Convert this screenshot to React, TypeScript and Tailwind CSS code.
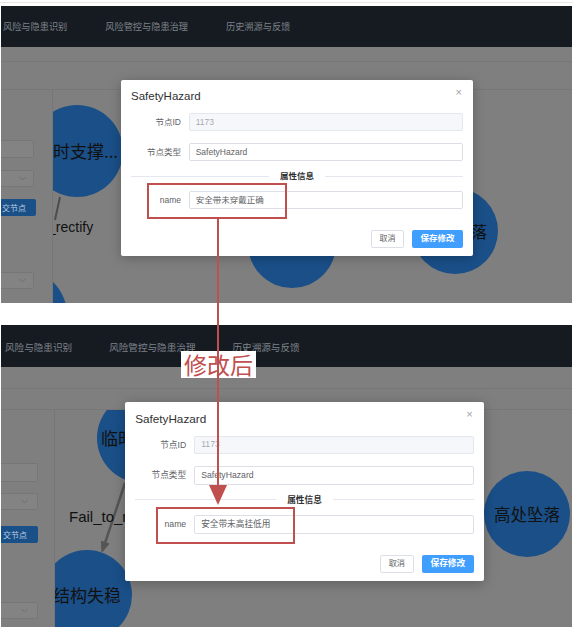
import React from "react";

const sans = "font-['Liberation_Sans','Noto_Sans_CJK_SC',sans-serif]";

function Row({ label, value, disabled }: { label: string; value: string; disabled?: boolean }) {
  return (
    <div className="flex items-center gap-[7.7px]">
      <span className="w-[50px] text-right text-[8.5px] text-[#606266] leading-none">{label}</span>
      <div
        className={
          disabled
            ? "flex-1 h-[18px] border border-[#e4e7ed] rounded-[2px] flex items-center px-[6px] text-[8.5px] bg-[#f5f7fa] text-[#a8abb2]"
            : "flex-1 h-[18px] border border-[#dcdfe6] rounded-[2px] flex items-center px-[6px] text-[8.5px] bg-white text-[#606266]"
        }
      >
        {value}
      </div>
    </div>
  );
}

function ModalBody({ nameValue }: { nameValue: string }) {
  return (
    <div className={`relative w-[352px] bg-white rounded-[2px] shadow-[0_2px_12px_rgba(0,0,0,0.25)] px-[10px] pb-[8px] ${sans}`}>
      <div className="flex items-center h-[33px]">
        <span className="text-[11.5px] text-[#303133] leading-none">SafetyHazard</span>
      </div>
      <span className="absolute top-[7px] right-[11px] text-[11px] leading-none text-[#a0a3a8]">×</span>
      <div className="flex flex-col gap-[12px]">
        <Row label="节点ID" value="1173" disabled />
        <Row label="节点类型" value="SafetyHazard" />
      </div>
      <div className="flex items-center h-[30px]">
        <div className="flex-1 h-px bg-[#e4e7ed]" />
        <span className="px-[11px] text-[8.5px] font-bold text-[#303133] leading-none">属性信息</span>
        <div className="flex-1 h-px bg-[#e4e7ed]" />
      </div>
      <Row label="name" value={nameValue} />
      <div className="flex justify-end gap-[8px] mt-[21px]">
        <div className="w-[33px] h-[17.5px] border border-[#dcdfe6] rounded-[2px] bg-white text-[8px] text-[#606266] flex items-center justify-center">
          取消
        </div>
        <div className="w-[51px] h-[17.5px] rounded-[2px] bg-[#409eff] text-[8.5px] font-bold text-white flex items-center justify-center">
          保存修改
        </div>
      </div>
    </div>
  );
}

function Nav({ big }: { big?: boolean }) {
  return (
    <div
      className={
        big
          ? "h-[42px] shrink-0 bg-[#161b22] flex items-center pl-[4px] pt-[3px] gap-[37px] text-[9.6px] text-[#7e838a] font-['Noto_Sans_CJK_SC',sans-serif]"
          : "h-[41px] shrink-0 bg-[#161b22] flex items-center pl-[2px] gap-[38px] text-[9.2px] text-[#7e838a] font-['Noto_Sans_CJK_SC',sans-serif]"
      }
    >
      <span>风险与隐患识别</span>
      <span>风险管控与隐患治理</span>
      <span>历史溯源与反馈</span>
    </div>
  );
}

function Chevron() {
  return (
    <svg width="7" height="5" viewBox="0 0 7 5">
      <path d="M0.5 1 L3.5 4 L6.5 1" fill="none" stroke="#6c6c6c" strokeWidth="0.9" />
    </svg>
  );
}

export default function App() {
  return (
    <div className={`relative w-[573px] h-[629px] bg-white overflow-hidden ${sans}`}>
      {/* top faint line */}
      <div className="h-[6px] pt-[2px]">
        <div className="h-px bg-[#e6e6e6]" />
      </div>

      {/* Panel 1 */}
      <div className="relative ml-[1px] w-[571px] h-[297px] flex flex-col overflow-hidden">
        <Nav />
        <div className="flex-1 flex flex-col bg-[#7f7f7f]">
          <div className="h-[15px] border-b border-[#777777]" />
          <div className="h-[28px] border-b border-[#777777]" />
          <div className="flex-1 flex">
            <div className="w-[52px] shrink-0 border-r border-[#767676] flex flex-col items-start pt-[50px]">
              <div className="w-[33px] h-[18px] bg-[#838383] border border-l-0 border-[#767676] rounded-r-[2px]" />
              <div className="mt-[12px] w-[33px] h-[17px] bg-[#838383] border border-l-0 border-[#767676] rounded-r-[2px] flex items-center justify-end pr-[7px]">
                <Chevron />
              </div>
              <div className="mt-[12px] w-[35px] h-[17px] bg-[#1a5088] rounded-r-[2px] text-[8px] text-[#bfcde0] flex items-center pl-[1px] font-['Noto_Sans_CJK_SC',sans-serif]">
                交节点
              </div>
              <div className="mt-[56px] w-[33px] h-[17px] bg-[#838383] border border-l-0 border-[#767676] rounded-r-[2px] flex items-center justify-end pr-[7px]">
                <Chevron />
              </div>
            </div>
            <div className="relative flex-1 overflow-hidden">
              <svg className="absolute inset-0 w-full h-full pointer-events-none" width="519" height="213">
                <line x1="7" y1="107" x2="2" y2="130" stroke="#4d4d4d" strokeWidth="2" />
              </svg>
              <div className="absolute left-[-22px] top-[15px] w-[92px] h-[92px] rounded-full bg-[#1a4f88] flex items-center justify-center whitespace-nowrap text-[17px] text-[#111] font-['Noto_Sans_CJK_SC',sans-serif]">
                临时支撑...
              </div>
              <div className="absolute left-[-47px] top-[128px] text-[14px] leading-[18px] text-[#111] font-['Liberation_Sans',sans-serif] whitespace-nowrap">
                Fail_to_rectify
              </div>
              <div className="absolute left-[-78px] top-[179px] w-[92px] h-[92px] rounded-full bg-[#1a4f88]" />
              <div className="absolute left-[195px] top-[110px] w-[88px] h-[88px] rounded-full bg-[#1a4f88]" />
              <div className="absolute left-[359px] top-[98px] w-[86px] h-[86px] rounded-full bg-[#1a4f88] flex items-center justify-center whitespace-nowrap text-[16px] text-[#111] font-['Noto_Sans_CJK_SC',sans-serif]">
                高处坠落
              </div>
            </div>
          </div>
        </div>
        <div className="absolute left-[120px] top-[74px]">
          <ModalBody nameValue="安全带未穿戴正确" />
        </div>
      </div>

      <div className="h-[22px]" />

      {/* Panel 2 */}
      <div className="relative ml-[1px] w-[571px] h-[302px] flex flex-col overflow-hidden">
        <Nav big />
        <div className="flex-1 flex flex-col bg-[#7f7f7f]">
          <div className="h-[22px] border-b border-[#777777]" />
          <div className="h-[21px] border-b border-[#777777]" />
          <div className="flex-1 flex">
            <div className="w-[54px] shrink-0 border-r border-[#767676] flex flex-col items-start pt-[53px]">
              <div className="w-[37px] h-[19px] bg-[#838383] border border-l-0 border-[#767676] rounded-r-[2px]" />
              <div className="mt-[11px] w-[37px] h-[17px] bg-[#838383] border border-l-0 border-[#767676] rounded-r-[2px] flex items-center justify-end pr-[9px]">
                <Chevron />
              </div>
              <div className="mt-[16px] w-[37px] h-[17px] bg-[#1a5088] rounded-r-[2px] text-[8px] text-[#bfcde0] flex items-center pl-[2px] font-['Noto_Sans_CJK_SC',sans-serif]">
                交节点
              </div>
              <div className="mt-[59px] w-[37px] h-[17px] bg-[#838383] border border-l-0 border-[#767676] rounded-r-[2px] flex items-center justify-end pr-[9px]">
                <Chevron />
              </div>
            </div>
            <div className="relative flex-1 overflow-hidden">
              <div className="absolute left-[42px] top-[-17px] w-[90px] h-[90px] rounded-full bg-[#1a4f88] flex items-center justify-center whitespace-nowrap text-[17px] text-[#111] font-['Noto_Sans_CJK_SC',sans-serif]">
                临时支撑...
              </div>
              <svg className="absolute inset-0 w-full h-full pointer-events-none" width="517" height="217">
                <line x1="70" y1="73" x2="50.2" y2="132.5" stroke="#555555" strokeWidth="2.5" />
                <polygon points="47,142 54,133.8 46.4,131.3" fill="#555555" stroke="#555555" strokeWidth="1" />
              </svg>
              <div className="absolute left-[14px] top-[97px] text-[15px] leading-[19px] text-[#111] font-['Liberation_Sans',sans-serif] whitespace-nowrap">
                Fail_to_rectify
              </div>
              <div className="absolute left-[-13px] top-[140px] w-[90px] h-[90px] rounded-full bg-[#1a4f88] flex items-center justify-center whitespace-nowrap text-[17px] text-[#111] font-['Noto_Sans_CJK_SC',sans-serif]">
                结构失稳
              </div>
              <div className="absolute left-[429px] top-[61px] w-[86px] h-[86px] rounded-full bg-[#1a4f88] flex items-center justify-center whitespace-nowrap text-[16.5px] text-[#111] font-['Noto_Sans_CJK_SC',sans-serif]">
                高处坠落
              </div>
            </div>
          </div>
        </div>
        <div className="absolute left-[124px] top-[77px]">
          <div className="[zoom:1.02]">
            <ModalBody nameValue="安全带未高挂低用" />
          </div>
        </div>
      </div>

      {/* Annotations */}
      <div className="absolute left-[147px] top-[183px] w-[140px] h-[36px] border-2 border-[#c0504d]" />
      <div className="absolute left-[156px] top-[507px] w-[139px] h-[37px] border-2 border-[#c0504d]" />
      <div className="absolute left-[181px] top-[351px] w-[75px] h-[27px] bg-white flex items-center justify-center text-[23px] leading-none text-[#c0504d] font-['Noto_Sans_CJK_SC',serif]">
        修改后
      </div>
      <div className="absolute left-[217px] top-[219px] w-[2px] h-[268px] bg-[#c0504d]" />
      <svg className="absolute left-[209px] top-[485px]" width="18" height="20" viewBox="0 0 18 20">
        <polygon points="0,0 18,0 9,20" fill="#c0504d" />
      </svg>
    </div>
  );
}
